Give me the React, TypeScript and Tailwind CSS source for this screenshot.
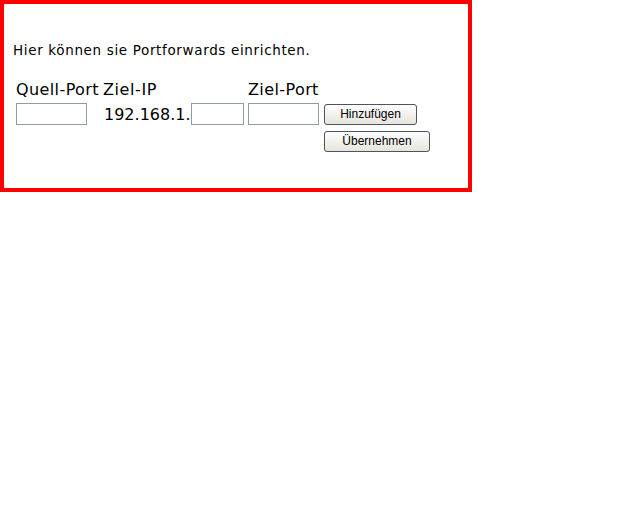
export default function App() {
  return (
    <div className="w-[640px] h-[512px] bg-white font-['DejaVu_Sans',Verdana,sans-serif] text-black">
      <div className="w-[472px] h-[192px] border-4 border-[#ff0000] pl-[9px] pt-[36px]">
        <p className="text-[13.5px] leading-[20px] tracking-[0.65px]">Hier können sie Portforwards einrichten.</p>
        <div className="mt-[19px] ml-[3px] grid grid-cols-[87px_145px_76px_auto] items-center">
          <span className="text-[16px] leading-[21px] tracking-[0.4px]">Quell-Port</span>
          <span className="text-[16px] leading-[21px] tracking-[0.6px]">Ziel-IP</span>
          <span className="text-[16px] leading-[21px] tracking-[0.4px]">Ziel-Port</span>
          <span />

          <div className="mt-[3px]">
            <input className="block w-[71px] h-[22px] border border-[#8d9cab] bg-white outline-none" />
          </div>
          <div className="mt-[3px] flex items-center">
            <span className="pl-[1px] text-[16px] leading-[21px]">192.168.1.</span>
            <input className="block w-[53px] h-[22px] border border-[#8d9cab] bg-white outline-none" />
          </div>
          <div className="mt-[3px]">
            <input className="block w-[71px] h-[22px] border border-[#8d9cab] bg-white outline-none" />
          </div>
          <div className="mt-[3px]">
            <button className="block w-[93px] h-[21px] rounded-[3px] border border-[#4a5560] bg-gradient-to-b from-white to-[#e6e4dc] font-['Liberation_Sans',Arial,sans-serif] text-[12px] leading-[19px]">
              Hinzufügen
            </button>
          </div>

          <span />
          <span />
          <span />
          <div className="mt-[6px]">
            <button className="block w-[106px] h-[21px] rounded-[3px] border border-[#4a5560] bg-gradient-to-b from-white to-[#e6e4dc] font-['Liberation_Sans',Arial,sans-serif] text-[12px] leading-[19px]">
              Übernehmen
            </button>
          </div>
        </div>
      </div>
    </div>
  );
}
